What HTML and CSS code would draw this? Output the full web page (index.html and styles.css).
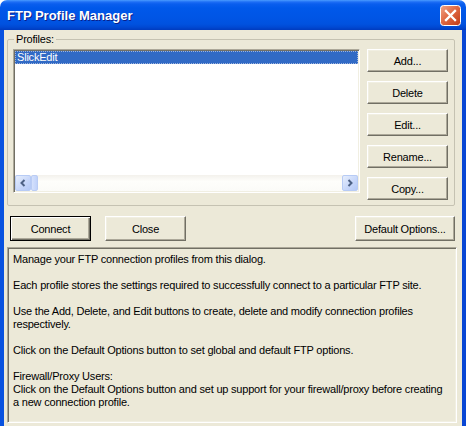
FILE: index.html
```html
<!DOCTYPE html>
<html>
<head>
<meta charset="utf-8">
<link rel="stylesheet" href="styles.css">
</head>
<body>
<div class="window">
  <div class="titlebar">
    <span class="title">FTP Profile Manager</span>
    <span class="close-btn">
      <svg width="21" height="21" viewBox="0 0 21 21">
        <defs>
          <linearGradient id="cg" x1="0" y1="0" x2="1" y2="1">
            <stop offset="0" stop-color="#F0A68A"/>
            <stop offset="0.45" stop-color="#E06A45"/>
            <stop offset="1" stop-color="#C13A14"/>
          </linearGradient>
        </defs>
        <rect x="0.5" y="0.5" width="20" height="20" rx="3" fill="url(#cg)" stroke="#FFFFFF"/>
        <path d="M6 6 L15 15 M15 6 L6 15" stroke="#FFFFFF" stroke-width="2.3" stroke-linecap="square"/>
      </svg>
    </span>
  </div>
  <div class="frame">
    <div class="body">
      <fieldset class="group">
        <legend>Profiles:</legend>
        <div class="group-row">
          <div class="listbox">
            <div class="list-items">
              <div class="item selected">SlickEdit</div>
            </div>
            <div class="hscroll">
              <div class="sb-btn">
                <svg width="8" height="8" viewBox="0 0 8 8"><path d="M5.5 1 L2.5 4 L5.5 7" fill="none" stroke="#4D6185" stroke-width="2"/></svg>
              </div>
              <div class="sb-thumb"></div>
              <div class="sb-track"></div>
              <div class="sb-btn">
                <svg width="8" height="8" viewBox="0 0 8 8"><path d="M2.5 1 L5.5 4 L2.5 7" fill="none" stroke="#4D6185" stroke-width="2"/></svg>
              </div>
            </div>
          </div>
          <div class="side-buttons">
            <div class="btn">Add...</div>
            <div class="btn">Delete</div>
            <div class="btn">Edit...</div>
            <div class="btn">Rename...</div>
            <div class="btn">Copy...</div>
          </div>
        </div>
      </fieldset>
      <div class="action-row">
        <div class="btn btn-wide btn-default">Connect</div>
        <div class="btn btn-wide">Close</div>
        <div class="spacer"></div>
        <div class="btn btn-options">Default Options...</div>
      </div>
      <div class="info">
        <p>Manage your FTP connection profiles from this dialog.</p>
        <p>Each profile stores the settings required to successfully connect to a particular FTP site.</p>
        <p>Use the Add, Delete, and Edit buttons to create, delete and modify connection profiles respectively.</p>
        <p>Click on the Default Options button to set global and default FTP options.</p>
        <p>Firewall/Proxy Users:<br>Click on the Default Options button and set up support for your firewall/proxy before creating a new connection profile.</p>
      </div>
    </div>
  </div>
</div>
</body>
</html>
```

FILE: styles.css
```css
html, body {
  margin: 0;
  padding: 0;
}
body {
  width: 466px;
  height: 426px;
  background: #FFFFFF;
  font-family: "Liberation Sans", Arial, sans-serif;
  font-size: 11px;
  letter-spacing: -0.2px;
  color: #000;
}
.window {
  width: 466px;
  height: 426px;
  display: flex;
  flex-direction: column;
  box-sizing: border-box;
  border-radius: 7px 7px 0 0;
  overflow: hidden;
}
.titlebar {
  height: 30px;
  flex: none;
  display: flex;
  align-items: center;
  padding: 0 5px 0 7px;
  box-sizing: border-box;
  background: linear-gradient(to bottom, #4A9BFF 0px, #1D6EF5 2px, #0A5EEE 4px, #0058EA 8px, #0055E5 18px, #0052DF 24px, #0049D4 27px, #003BBE 30px);
}
.title {
  flex: 1;
  color: #FFFFFF;
  font-family: "Liberation Sans", Arial, sans-serif;
  font-weight: bold;
  font-size: 13px;
  letter-spacing: 0;
  text-shadow: 1px 1px 0 #0A1F8A;
  padding-top: 1px;
}
.close-btn {
  width: 21px;
  height: 21px;
  display: block;
  margin-top: 1px;
}
.close-btn svg {
  display: block;
}
.frame {
  flex: 1;
  display: flex;
  border-left: 4px solid #0852E0;
  border-right: 4px solid #0846D4;
  border-bottom: 4px solid #0831C8;
  box-shadow: inset 1px 0 0 #1C6AF0;
}
.body {
  flex: 1;
  background: #ECE9D8;
  display: flex;
  flex-direction: column;
  padding: 3px 0 3px 0;
}
.group {
  margin: 0 7px 0 3px;
  padding: 3px 6px 5px 5px;
  border: 1px solid #C5C2B2;
  border-radius: 2px;
  min-width: 0;
}
.group legend {
  padding: 0 2px;
  margin-left: 1px;
  line-height: 13px;
  font-size: 11px;
  color: #000;
}
.group-row {
  display: flex;
  gap: 7px;
}
.listbox {
  width: 347px;
  height: 144px;
  box-sizing: border-box;
  background: #FFFFFF;
  border: 1px solid;
  border-color: #ACA899 #FFFFFF #FFFFFF #ACA899;
  box-shadow: inset 1px 1px 0 #716F64, inset -1px -1px 0 #F1EFE2;
  padding: 1px;
  display: flex;
  flex-direction: column;
}
.list-items {
  flex: 1;
}
.item {
  height: 13px;
  line-height: 13px;
  padding-left: 2px;
  box-sizing: border-box;
}
.item.selected {
  background: #316AC5;
  color: #FFFFFF;
  outline: 1px dotted #9FB4DC;
  outline-offset: -1px;
}
.hscroll {
  height: 16px;
  display: flex;
  background: linear-gradient(to bottom, #F3F1EC, #FEFEFB 40%, #FBFBF8);
}
.sb-btn {
  width: 16px;
  height: 16px;
  box-sizing: border-box;
  border: 1px solid #B7CBF5;
  border-radius: 2px;
  background: linear-gradient(135deg, #E6EEFC, #C6D6FA 60%, #B4C9F6);
  display: flex;
  align-items: center;
  justify-content: center;
}
.sb-btn svg {
  display: block;
}
.sb-thumb {
  width: 7px;
  height: 16px;
  box-sizing: border-box;
  border: 1px solid #BACCF4;
  border-radius: 2px;
  background: linear-gradient(to right, #D5E1FC, #C0D2FA);
}
.sb-track {
  flex: 1;
}
.side-buttons {
  display: flex;
  flex-direction: column;
  gap: 9px;
}
.btn {
  width: 81px;
  height: 23px;
  box-sizing: border-box;
  display: flex;
  align-items: center;
  justify-content: center;
  background: #ECE9D8;
  border: 1px solid;
  border-color: #FFFFFF #716F64 #716F64 #FFFFFF;
  box-shadow: inset -1px -1px 0 #ACA899, inset 1px 1px 0 #F1EFE2;
  font-size: 11px;
  color: #000;
}
.action-row {
  display: flex;
  margin: 10px 7px 0 6px;
  gap: 14px;
}
.btn-wide {
  height: 25px;
}
.btn-default {
  border: 1px solid #000000;
  box-shadow: inset 1px 1px 0 #FFFFFF, inset -1px -1px 0 #716F64, inset -2px -2px 0 #ACA899;
}
.spacer {
  flex: 1;
}
.btn-options {
  width: 100px;
  height: 25px;
}
.info {
  flex: 1;
  margin: 6px 5px 0 3px;
  border: 1px solid;
  border-color: #ACA899 #FFFFFF #FFFFFF #ACA899;
  box-shadow: inset 1px 1px 0 #716F64, inset -1px -1px 0 #F1EFE2;
  padding: 5px 9px 0 5px;
  line-height: 13px;
}
.info p {
  margin: 0 0 13px 0;
}
```
